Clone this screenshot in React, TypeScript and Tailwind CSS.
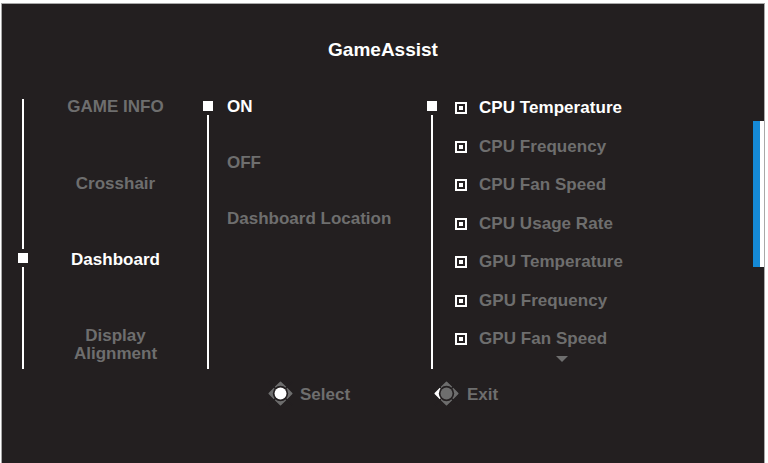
import React from "react";

function Joy({ center, left }: { center: string; left: string }) {
  const lobe = "#6e6e6e";
  return (
    <svg width="25" height="25" viewBox="0 0 26 26">
      <g strokeLinejoin="round" strokeWidth="1.5">
        <polygon points="13,1.2 18.9,7.1 13,13 7.1,7.1" fill={lobe} stroke={lobe} />
        <polygon points="24.8,13 18.9,18.9 13,13 18.9,7.1" fill={lobe} stroke={lobe} />
        <polygon points="13,24.8 7.1,18.9 13,13 18.9,18.9" fill={lobe} stroke={lobe} />
        <polygon points="1.2,13 7.1,7.1 13,13 7.1,18.9" fill={left} stroke={left} />
      </g>
      <line x1="0" y1="0" x2="26" y2="26" stroke="#231f20" strokeWidth="1.4" />
      <line x1="26" y1="0" x2="0" y2="26" stroke="#231f20" strokeWidth="1.4" />
      <circle cx="13" cy="13" r="8" fill="#231f20" />
      <circle cx="13" cy="13" r="6.2" fill={center} />
    </svg>
  );
}

function Marker({ top }: { top: string }) {
  return (
    <div className="w-[10px] flex flex-col items-center">
      <div className={`${top} w-[10px] h-[10px] bg-white`} />
      <div className="mt-[4px] flex-1 w-[2px] bg-white" />
    </div>
  );
}

const items = [
  "CPU Temperature",
  "CPU Frequency",
  "CPU Fan Speed",
  "CPU Usage Rate",
  "GPU Temperature",
  "GPU Frequency",
  "GPU Fan Speed",
];

export default function App() {
  return (
    <div className="w-[768px] h-[463px] bg-white pt-[3px] pl-[1px] font-['Liberation_Sans',Arial,sans-serif] font-bold">
      <div className="relative w-[764px] h-[460px] bg-[#231f20] border-t border-l border-r border-[#a8a8a8] flex flex-col">
        <div className="pt-[35px] h-[57px] text-center text-white text-[19px] leading-[22px]">
          GameAssist
        </div>

        <div className="mt-[35px] h-[273px] flex">
          <div className="ml-[16px] w-[10px] flex flex-col items-center">
            <div className="mt-[3px] h-[150px] w-[2px] bg-white" />
            <div className="mt-[4px] w-[10px] h-[10px] bg-white" />
            <div className="mt-[4px] flex-1 w-[2px] bg-white" />
          </div>

          <div className="w-[175px] pt-[1px] flex flex-col items-center text-center text-[17px] leading-[20px] text-[#6e6e6e]">
            <div>GAME INFO</div>
            <div className="mt-[57px]">Crosshair</div>
            <div className="mt-[56px] text-white">Dashboard</div>
            <div className="mt-[57px] leading-[18px]">
              Display
              <br />
              Alignment
            </div>
          </div>

          <Marker top="mt-[5px]" />

          <div className="ml-[14px] w-[200px] pt-[1px] flex flex-col text-[17px] leading-[20px] text-[#6e6e6e]">
            <div className="text-white">ON</div>
            <div className="mt-[36px]">OFF</div>
            <div className="mt-[36px]">Dashboard Location</div>
          </div>

          <Marker top="mt-[5px]" />

          <div className="ml-[18px] flex flex-col pt-[2px]">
            <div className="flex flex-col gap-[18.5px]">
              {items.map((t, i) => (
                <div key={t} className="h-[20px] flex items-start gap-[12px]">
                  <div className="mt-[4px] w-[12px] h-[12px] border-2 border-white p-[2px]">
                    <div className="w-[4px] h-[4px] bg-white" />
                  </div>
                  <span
                    className={`text-[17px] leading-[20px] tracking-[0.05px] ${
                      i === 0 ? "text-white" : "text-[#6e6e6e]"
                    }`}
                  >
                    {t}
                  </span>
                </div>
              ))}
            </div>
            <svg className="mt-[7px] ml-[101px]" width="12" height="6" viewBox="0 0 12 6">
              <polygon points="0,0 12,0 6,6" fill="#6e6e6e" />
            </svg>
          </div>
        </div>

        <div className="mt-[12px] flex items-center h-[25px] text-[17px] leading-[20px] text-[#6e6e6e]">
          <div className="ml-[266px] w-[166px] flex items-center gap-[7px]">
            <Joy center="#ffffff" left="#6e6e6e" />
            <span className="mt-[2px]">Select</span>
          </div>
          <div className="flex items-center gap-[8px]">
            <Joy center="#6e6e6e" left="#ffffff" />
            <span className="mt-[2px]">Exit</span>
          </div>
        </div>

        <div className="absolute right-0 top-[117px] h-[146px] flex">
          <div className="w-[7px] bg-[#1589d6]" />
          <div className="w-[4px] bg-white" />
        </div>
      </div>
    </div>
  );
}
